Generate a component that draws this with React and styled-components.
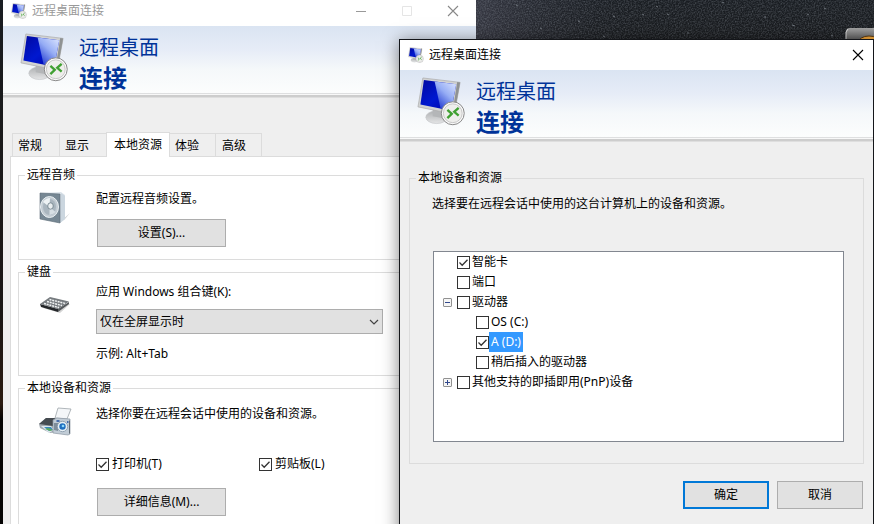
import React from 'react';
import styled, { createGlobalStyle, css } from 'styled-components';

const navy = '#003399';
const face = '#efefef';
const line = '#dcdcdc';

const GlobalStyle = createGlobalStyle`
    * {
        box-sizing: border-box;
    }
    body {
        margin: 0;
    }
    body, button, select, input {
        font: 12px/16px "Noto Sans", "Noto Sans CJK SC", sans-serif;
        color: #000;
    }
`;

const Desktop = styled.main`
    position: relative;
    height: 100vh;
    overflow: hidden;
    background: linear-gradient(#1a1e23 0, #1a1c1f 40px, #1b1715 60%, #2a1a10 77%, #050403 80%);
`;

const Wallpaper = styled.svg`
    position: absolute;
    top: 0;
    right: 0;
    width: 400px;
    height: 40px;
`;

const Window = styled.section`
    position: absolute;
    top: 0;
    left: 3px;
    right: 398px;
    min-height: 100%;
    background: ${face};
`;

const DialogWindow = styled(Window)`
    top: 39px;
    left: 399px;
    right: 0;
    border: 1px solid #14161a;
    box-shadow: 0 2px 16px rgba(0, 0, 0, 0.5);
`;

const TitleBar = styled.header`
    display: flex;
    align-items: center;
    height: 30px;
    padding-left: 8px;
    gap: 5px;
    background: #fff;
    ${props => props.$inactive && css`
        height: 26px;
        padding-bottom: 5px;
        color: #999;
    `}
`;

const WindowName = styled.span`
    flex: 1;
`;

const Controls = styled.div`
    display: flex;
`;

const ControlButton = styled.button`
    display: grid;
    place-items: center;
    width: ${props => props.$narrow ? '30px' : '46px'};
    height: 20px;
    padding: 0;
    border: 0;
    background: none;
    color: ${props => props.$color};
`;

const BannerBox = styled.div`
    display: flex;
    gap: 10px;
    padding: 7px 17px 0;
    border-bottom: 1px solid #dedfe0;
    background: linear-gradient(#dae4f2, #e6ecf7 35%, #f5f8fa 65%, #fcfdfd);
`;

const BannerRule = styled.div`
    height: 4px;
    border-top: 1px solid #f8f8f8;
    border-bottom: 1px solid #dedede;
    background: #cdcdcd;
`;

const BannerTitle = styled.h1`
    margin: 0;
    font-size: 20px;
    line-height: 30px;
    font-weight: 400;
    color: ${navy};
`;

const BannerStrong = styled.strong`
    display: block;
    font-size: 24px;
`;

const TabArea = styled.div`
    padding: 34px 7px 0;
`;

const TabList = styled.div`
    display: flex;
    align-items: flex-end;
    padding-left: 2px;
`;

const Tab = styled.button`
    width: 47px;
    height: 23px;
    padding: 2px 5px 0;
    border: 1px solid ${line};
    border-bottom: 0;
    border-right: 0;
    background: ${face};
    text-align: left;
    &:last-child {
        padding-left: 6px;
        border-right: 1px solid ${line};
    }
    &[aria-selected='true'] {
        width: 64px;
        height: 25px;
        margin-bottom: -1px;
        padding: 0 7px;
        border-right: 1px solid ${line};
        background: #fff;
        z-index: 1;
    }
    &[aria-selected='true'] + & {
        width: 45px;
        border-left: 0;
    }
`;

const TabPanel = styled.div`
    display: flex;
    flex-direction: column;
    gap: 4px;
    padding: 10px 7px;
    border: 1px solid ${line};
    background: #fff;
`;

const GroupBox = styled.fieldset`
    min-width: 0;
    margin: 0;
    padding: 0 6px;
    border: 1px solid ${line};
`;

const GroupName = styled.legend`
    padding: 0 2px;
`;

const GroupBody = styled.div`
    display: grid;
    grid-template-columns: 57px 1fr;
    padding: ${props => props.$top}px 0 ${props => props.$bottom || 12}px 14px;
`;

const GroupIcon = styled.div`
    padding-top: ${props => props.$drop || 0}px;
    line-height: 0;
`;

const GroupContent = styled.div`
    display: flex;
    flex-direction: column;
    align-items: flex-start;
    gap: ${props => props.$gap}px;
`;

const Text = styled.p`
    margin: 0;
`;

const PushButton = styled.button`
    width: 129px;
    height: 28px;
    margin: 0 1px;
    padding: 0;
    border: 1px solid #adadad;
    background: #e1e1e1;
`;

const DialogButton = styled(PushButton)`
    width: 86px;
    ${props => props.$primary && 'border: 2px solid #0078d7;'}
`;

const Field = styled.div`
    display: grid;
    width: 287px;
    align-items: center;
`;

const FieldLabel = styled.label`
    padding-bottom: 9px;
`;

const Select = styled.select`
    grid-area: 1 / 1;
    height: 25px;
    padding: 0 3px;
    border: 1px solid #adadad;
    border-radius: 0;
    background: #e1e1e1;
    appearance: none;
`;

const Chevron = styled.svg`
    grid-area: 1 / 1;
    justify-self: end;
    margin-right: 3px;
    pointer-events: none;
`;

const CheckRow = styled.div`
    display: grid;
    grid-template-columns: 163px auto;
    padding-top: 18px;
`;

const CheckLabel = styled.label`
    display: flex;
    align-items: center;
    gap: ${props => props.$gap || 0}px;
`;

const CheckFrame = styled.span`
    display: grid;
    width: 13px;
    height: 13px;
`;

const CheckInput = styled.input`
    grid-area: 1 / 1;
    width: 13px;
    height: 13px;
    margin: 0;
    border: 1px solid #333;
    background: #fff;
    appearance: none;
    &:not(:checked) + svg {
        visibility: hidden;
    }
`;

const CheckMark = styled.svg`
    grid-area: 1 / 1;
    pointer-events: none;
`;

const DialogBody = styled.div`
    padding: 28px 9px 0;
`;

const DeviceBody = styled.div`
    padding: 10px 13px 21px 16px;
`;

const Tree = styled.ul`
    min-height: 191px;
    margin: 39px 0 0 1px;
    padding: 0 9px;
    border: 1px solid #828790;
    background: #fff;
    list-style: none;
`;

const SubTree = styled.ul`
    margin: 0;
    padding: 0 0 0 19px;
    list-style: none;
`;

const TreeRow = styled.div`
    display: grid;
    grid-template-columns: 14px auto;
    justify-content: start;
    align-items: center;
    height: 20px;
`;

const Expander = styled.button`
    display: block;
    width: 9px;
    height: 9px;
    padding: 0;
    border: 0;
    background: none;
    line-height: 0;
`;

const NodeText = styled.span`
    padding: 2px;
    ${props => props.$selected && css`
        background: #3399ff;
        color: #fff;
    `}
`;

const Footer = styled.footer`
    display: flex;
    justify-content: flex-end;
    gap: 6px;
    padding-top: 17px;
`;

const MonitorIcon = ({ size, id }) => (
    <svg width={size} height={size} viewBox="0 0 48 50" aria-hidden="true">
        <defs>
            <linearGradient id={`${id}-deep`} x1="0" y1="0" x2="1" y2="1">
                <stop offset="0" stopColor="#0008a0" />
                <stop offset="0.5" stopColor="#0018d0" />
                <stop offset="1" stopColor="#0000a0" />
            </linearGradient>
            <linearGradient id={`${id}-glow`} x1="1" y1="0" x2="0.3" y2="1">
                <stop offset="0" stopColor="#dfe8ff" />
                <stop offset="0.5" stopColor="#96adf5" />
                <stop offset="1" stopColor="#2038d0" />
            </linearGradient>
            <linearGradient id={`${id}-base`} x1="0" y1="0" x2="0" y2="1">
                <stop offset="0" stopColor="#aeb0b2" />
                <stop offset="1" stopColor="#e4e5e6" />
            </linearGradient>
        </defs>
        <ellipse cx="19" cy="41" rx="11" ry="6.5" fill={`url(#${id}-base)`} stroke="#c0c2c4" strokeWidth="0.6" />
        <path d="M15 33l12 2-1 7-11-2z" fill="#b4b6b8" />
        <path d="M5 1L43 5.500L37 38 0 30.500z" fill="#d2d3d3" stroke="#aaa" strokeWidth="0.7" />
        <path d="M40 5L43 5.500L37 38l-2-.5z" fill="#8f9293" />
        <path d="M6 3L39 7.500L34 34.500 2.500 28z" fill={`url(#${id}-deep)`} />
        <path d="M17 4.500L39 7.500L34 34.500 23 32z" fill={`url(#${id}-glow)`} />
        <circle cx="35.500" cy="37" r="11.700" fill="#fafafa" stroke="#858585" strokeWidth="1" />
        <circle cx="35.500" cy="37" r="9.600" fill="#eeeeec" stroke="#bbb" strokeWidth="0.8" />
        <path d="M30 33.500l4.500 4-4.500 4.500M41.500 31.500l-4.500 4 4.500 4" fill="none" stroke="#40a032" strokeWidth="2.400" />
    </svg>
);

const SpeakerIcon = () => (
    <svg width="32" height="34" viewBox="0 0 32 34" aria-hidden="true">
        <path d="M20 32L31 22 26 28z" fill="#c9cccf" />
        <path d="M1 2L22 1l4 3v24l-5 4z" fill="#dce4ea" />
        <path d="M22 2l4 3v23l-5 4z" fill="#cbd6df" />
        <path d="M1 2L21 3v29L1 28z" fill="#768793" stroke="#5b6a75" strokeWidth="0.6" />
        <ellipse cx="10.500" cy="16" rx="9" ry="10.500" fill="#c3ccd3" stroke="#e8eef1" />
        <ellipse cx="10.500" cy="16" rx="6.500" ry="8" fill="#a9b5be" />
        <path d="M10.500 16L4 11q3-4 7-4z" fill="#edf2f4" />
        <path d="M10.500 16l6 5q-3 3-6 3z" fill="#d7dfe4" />
        <ellipse cx="11.500" cy="15" rx="2.800" ry="3.200" fill="#e8edef" stroke="#667782" strokeWidth="0.8" />
    </svg>
);

const KeyboardIcon = () => (
    <svg width="32" height="18" viewBox="0 0 32 18" aria-hidden="true">
        <path d="M4 12l17 5 10-9-5 0z" fill="#d4d4d4" />
        <path d="M1 8l18 5v3L2 11z" fill="#24272a" />
        <path d="M19 13L30 6v2l-11 8z" fill="#55595c" />
        <path d="M1 8L11 1l19 4.500L19 13z" fill="#767b7f" />
        <path d="M5 7.500l15 4M8 5.500l15 4M10.500 3.500l16 4" fill="none" stroke="#f1f3f4" strokeWidth="1.500" strokeDasharray="2 0.8" />
    </svg>
);

const DevicesIcon = () => (
    <svg width="34" height="32" viewBox="0 0 34 32" aria-hidden="true">
        <path d="M16 12L19 2l13 1-4 10z" fill="#f4f6f8" stroke="#9da4aa" strokeWidth="0.8" />
        <path d="M0 18L7 12h10l1 14-7 1L1 22z" fill="#a2a9af" />
        <path d="M0 18L7 12h9l-2 8z" fill="#454b50" />
        <path d="M2 20l10 0 3 4-5 3z" fill="#dce6ed" />
        <path d="M5 21l7 0 2 3-4 1z" fill="#3b88bd" />
        <path d="M6 23l5 2 3-1-5-2z" fill="#60ad58" />
        <path d="M14 14l4-2 13 1v15l-2 1-15-2z" fill="#c1ccd6" stroke="#8c98a4" strokeWidth="0.7" />
        <path d="M15 17h4v8l-4-1z" fill="#7e8d9b" />
        <path d="M30 14l1 1v12l-1 1z" fill="#606b75" />
        <circle cx="23.500" cy="20.500" r="5.200" fill="#e8f0f5" stroke="#8294a5" strokeWidth="0.8" />
        <circle cx="23.500" cy="20.500" r="3.200" fill="#2070c0" />
        <circle cx="24" cy="20" r="1.300" fill="#8cd8fa" />
        <path d="M17.500 15h3M28 16h1.500" stroke="#1f4fa0" strokeWidth="1.500" />
    </svg>
);

const CloseGlyph = () => (
    <svg width="12" height="12" viewBox="0 0 12 12" aria-hidden="true">
        <path d="M1 1l10 10M11 1L1 11" stroke="currentColor" strokeWidth="1.100" />
    </svg>
);

const Check = ({ id, checked }) => (
    <CheckFrame>
        <CheckInput type="checkbox" id={id} defaultChecked={checked} />
        <CheckMark width="13" height="13" viewBox="0 0 13 13" aria-hidden="true">
            <path d="M2.500 6.500l2.700 2.700 5.300-5.500" fill="none" stroke="#333" strokeWidth="1.300" />
        </CheckMark>
    </CheckFrame>
);

const ToggleGlyph = ({ open }) => (
    <svg width="9" height="9" viewBox="0 0 9 9" aria-hidden="true">
        <rect x="0.5" y="0.5" width="8" height="8" rx="0.5" fill="#f5f5f5" stroke="#919191" />
        <path d={open ? 'M2 4.500h5' : 'M2 4.500h5M4.500 2v5'} stroke="#31488c" />
    </svg>
);

const Banner = ({ id }) => (
    <div>
        <BannerBox>
            <MonitorIcon size={49} id={id} />
            <BannerTitle>
                远程桌面
                <BannerStrong>连接</BannerStrong>
            </BannerTitle>
        </BannerBox>
        <BannerRule />
    </div>
);

const TreeNode = ({ id, label, checked, selected, open, items }) => (
    <li>
        <TreeRow>
            {items ? (
                <Expander type="button" aria-label={label} aria-expanded={open}>
                    <ToggleGlyph open={open} />
                </Expander>
            ) : <span />}
            <CheckLabel htmlFor={id}>
                <Check id={id} checked={checked} />
                <NodeText $selected={selected}>{label}</NodeText>
            </CheckLabel>
        </TreeRow>
        {open && (
            <SubTree>
                {items.map(item => <TreeNode key={item.id} {...item} />)}
            </SubTree>
        )}
    </li>
);

const tabs = ['常规', '显示', '本地资源', '体验', '高级'];

const devices = [
    { id: 'smartcard', label: '智能卡', checked: true },
    { id: 'ports', label: '端口' },
    {
        id: 'drives',
        label: '驱动器',
        open: true,
        items: [
            { id: 'drive-c', label: 'OS (C:)' },
            { id: 'drive-d', label: 'A (D:)', checked: true, selected: true },
            { id: 'drive-later', label: '稍后插入的驱动器' },
        ],
    },
    { id: 'pnp', label: '其他支持的即插即用(PnP)设备', items: [] },
];

const Background = () => (
    <Wallpaper viewBox="0 0 400 40" aria-hidden="true">
        <defs>
            <filter id="grain">
                <feTurbulence type="fractalNoise" baseFrequency="0.7" numOctaves="2" />
                <feColorMatrix values="0 0 0 0 0.4  0 0 0 0 0.44  0 0 0 0 0.5  0.6 0 0 0 -0.22" />
            </filter>
            <linearGradient id="haze" x1="0" y1="0" x2="1" y2="0">
                <stop offset="0" stopColor="#5a5a6c" stopOpacity="0.45" />
                <stop offset="0.4" stopColor="#2a2e38" stopOpacity="0" />
            </linearGradient>
            <linearGradient id="tile" x1="0" y1="0" x2="0" y2="1">
                <stop offset="0" stopColor="#a4a4a4" />
                <stop offset="1" stopColor="#606060" />
            </linearGradient>
        </defs>
        <rect width="400" height="40" fill="url(#haze)" />
        <rect width="400" height="40" filter="url(#grain)" />
        <path
            d="M42 5l2 1M66 28l2 1M104 21l2 1M139 16l2 1M129 36l2 1M168 14l2 1M182 6l2 1M193 14l2 1M213 33h2M248 2l2 1M290 17h2M318 25l3 1M333 14l2 1M350 8l2 1M357 35l2 1"
            stroke="#6f757c"
        />
        <path d="M372 40v-8q0-4 4-4h24v12z" fill="url(#tile)" />
        <path d="M372 40v-8l2-3" fill="none" stroke="#ddd" />
        <ellipse cx="395" cy="43" rx="11" ry="7" fill="#f1a63a" stroke="#5c3a10" />
    </Wallpaper>
);

const ConnectionWindow = () => (
    <Window aria-label="远程桌面连接">
        <TitleBar $inactive>
            <MonitorIcon size={16} id="main-small" />
            <WindowName>远程桌面连接</WindowName>
            <Controls>
                <ControlButton type="button" aria-label="最小化" $color="#999">
                    <svg width="10" height="10"><path d="M0 5.500h10" stroke="currentColor" /></svg>
                </ControlButton>
                <ControlButton type="button" aria-label="最大化" $color="#e5e5e5">
                    <svg width="10" height="10"><path d="M.5.5h9v9h-9z" fill="none" stroke="currentColor" /></svg>
                </ControlButton>
                <ControlButton type="button" aria-label="关闭" $color="#888"><CloseGlyph /></ControlButton>
            </Controls>
        </TitleBar>
        <Banner id="main-large" />
        <TabArea>
            <TabList role="tablist">
                {tabs.map(tab => (
                    <Tab key={tab} type="button" role="tab" aria-selected={tab === '本地资源'}>{tab}</Tab>
                ))}
            </TabList>
            <TabPanel role="tabpanel">
                <GroupBox>
                    <GroupName>远程音频</GroupName>
                    <GroupBody $top={8}>
                        <GroupIcon><SpeakerIcon /></GroupIcon>
                        <GroupContent $gap={12}>
                            <Text>配置远程音频设置。</Text>
                            <PushButton type="button">设置(S)...</PushButton>
                        </GroupContent>
                    </GroupBody>
                </GroupBox>
                <GroupBox>
                    <GroupName>键盘</GroupName>
                    <GroupBody $top={4} $bottom={13}>
                        <GroupIcon $drop={12}><KeyboardIcon /></GroupIcon>
                        <GroupContent $gap={0}>
                            <FieldLabel htmlFor="combo">应用 Windows 组合键(K):</FieldLabel>
                            <GroupContent $gap={12}>
                                <Field>
                                    <Select id="combo">
                                        <option>仅在全屏显示时</option>
                                    </Select>
                                    <Chevron width="12" height="8" viewBox="0 0 12 8" aria-hidden="true">
                                        <path d="M2 2l4 4 4-4" fill="none" stroke="#444" strokeWidth="1.200" />
                                    </Chevron>
                                </Field>
                                <Text>示例: Alt+Tab</Text>
                            </GroupContent>
                        </GroupContent>
                    </GroupBody>
                </GroupBox>
                <GroupBox>
                    <GroupName>本地设备和资源</GroupName>
                    <GroupBody $top={10}>
                        <GroupIcon><DevicesIcon /></GroupIcon>
                        <GroupContent $gap={16}>
                            <Text>选择你要在远程会话中使用的设备和资源。</Text>
                            <CheckRow>
                                <CheckLabel $gap={3} htmlFor="printer"><Check id="printer" checked />打印机(T)</CheckLabel>
                                <CheckLabel $gap={3} htmlFor="clipboard"><Check id="clipboard" checked />剪贴板(L)</CheckLabel>
                            </CheckRow>
                            <PushButton type="button">详细信息(M)...</PushButton>
                        </GroupContent>
                    </GroupBody>
                </GroupBox>
            </TabPanel>
        </TabArea>
    </Window>
);

const DeviceDialog = () => (
    <DialogWindow role="dialog" aria-label="远程桌面连接">
        <TitleBar>
            <MonitorIcon size={16} id="dialog-small" />
            <WindowName>远程桌面连接</WindowName>
            <ControlButton type="button" aria-label="关闭" $color="#000" $narrow><CloseGlyph /></ControlButton>
        </TitleBar>
        <Banner id="dialog-large" />
        <DialogBody>
            <GroupBox>
                <GroupName>本地设备和资源</GroupName>
                <DeviceBody>
                    <Text>选择要在远程会话中使用的这台计算机上的设备和资源。</Text>
                    <Tree>
                        {devices.map(device => <TreeNode key={device.id} {...device} />)}
                    </Tree>
                </DeviceBody>
            </GroupBox>
            <Footer>
                <DialogButton type="button" $primary>确定</DialogButton>
                <DialogButton type="button">取消</DialogButton>
            </Footer>
        </DialogBody>
    </DialogWindow>
);

const App = () => (
    <Desktop>
        <GlobalStyle />
        <Background />
        <ConnectionWindow />
        <DeviceDialog />
    </Desktop>
);

export default App;
